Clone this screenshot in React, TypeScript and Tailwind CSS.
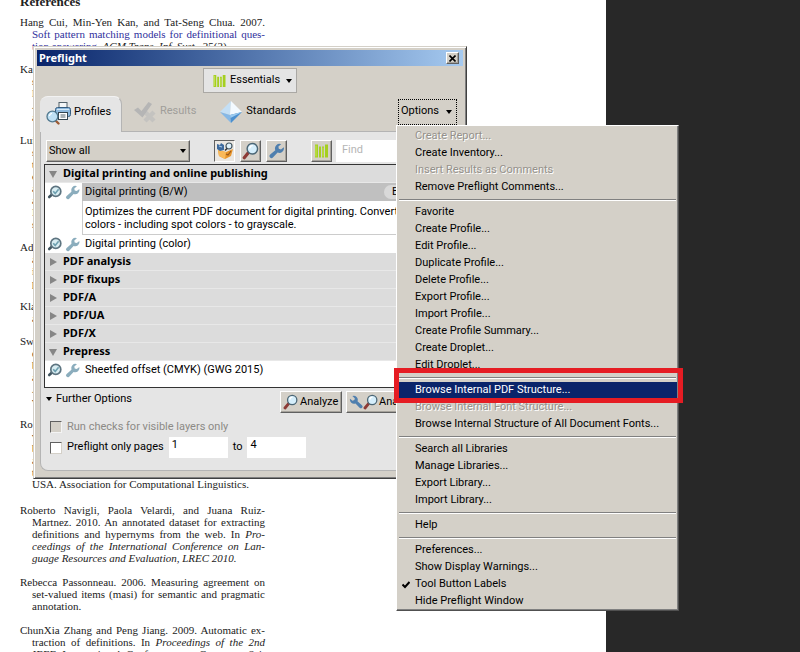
import React from "react";

const raised =
  "border border-t-white border-l-white border-r-[#606060] border-b-[#606060] bg-[#d4d0c8] shadow-[inset_-1px_-1px_0_#a5a29b]";

const Magnifier = ({ className = "" }: { className?: string }) => (
  <svg viewBox="0 0 20 20" className={className} aria-hidden="true">
    <path d="M7 12 L2.5 17.5" stroke="#8d3b36" strokeWidth="3.6" strokeLinecap="round" />
    <circle cx="11.5" cy="7.5" r="5.8" fill="#d5eefb" stroke="#4b6675" strokeWidth="1.6" />
    <path d="M8.5 7 a3.4 3.4 0 0 1 3.4 -3" fill="none" stroke="#fff" strokeWidth="1.6" />
  </svg>
);

const CheckMagnifier = () => (
  <svg viewBox="0 0 16 16" className="h-4 w-4" aria-hidden="true">
    <path d="M5 10.5 L2.2 13" stroke="#40545f" strokeWidth="2.6" strokeLinecap="round" />
    <circle cx="8.8" cy="7.4" r="5" fill="#d9edf2" stroke="#5d7480" strokeWidth="1.7" />
    <path d="M6.2 7.2 l2 2.2 l3.4 -4.2" fill="none" stroke="#6ea0b0" strokeWidth="1.6" />
  </svg>
);

const Wrench = ({ className = "", color = "#4f7fae" }: { className?: string; color?: string }) => (
  <svg viewBox="0 0 16 16" className={className} aria-hidden="true">
    <path
      d="M12.2 1.2 A4.6 4.6 0 0 0 6.3 7.2 L1.2 11.6 A1.9 1.9 0 0 0 3.9 14.6 L8.6 9.6 A4.6 4.6 0 0 0 14.8 4.2 L12 6.5 L9.8 5.8 L9.4 3.6 Z"
      fill={color}
    />
  </svg>
);

const Bars = ({ className = "" }: { className?: string }) => (
  <svg viewBox="0 0 13 13" className={className} aria-hidden="true">
    <path d="M0 0h3v13H0zM4 2h2v11H4zM7 2h2v11H7zM10 0h3v13h-3z" fill="#a5cf20" />
    <path d="M1 1v11M8 3v9" stroke="#c3e35a" />
  </svg>
);

const ProfilesIcon = () => (
  <svg viewBox="0 0 26 24" className="h-6 w-[26px]" aria-hidden="true">
    <rect x="13" y="1.5" width="8" height="7" fill="#f4f6f7" stroke="#53626b" />
    <rect x="9.5" y="6.5" width="15" height="9" rx="2" fill="#8db8dc" stroke="#345c80" />
    <path d="M11 8.5h12" stroke="#d3e8f7" />
    <rect x="12.5" y="11.5" width="9" height="7" fill="#fff" stroke="#33444f" />
    <path d="M14.5 14h5M14.5 16h5" stroke="#53626b" />
    <path d="M9.5 19.5 L12.5 22.5" stroke="#9c5b35" strokeWidth="2.4" strokeLinecap="round" />
    <circle cx="6.4" cy="15.5" r="5.4" fill="#bfe0f4" stroke="#52798f" strokeWidth="1.3" />
    <path d="M3.4 15 a3 3 0 0 1 2.6 -2.6" fill="none" stroke="#fff" strokeWidth="1.3" />
  </svg>
);

const ResultsIcon = () => (
  <svg viewBox="0 0 26 24" className="h-6 w-[26px]" aria-hidden="true">
    <path d="M12 12 L21 21 M21 12 L12 21" stroke="#c4c3c0" strokeWidth="4.4" />
    <path d="M1 10 L5 7.5 L8.5 11 L15.5 2 L19 4 L9.5 17.5 Z" fill="#b5b5b5" />
  </svg>
);

const StandardsIcon = () => (
  <svg viewBox="0 0 22 24" className="h-6 w-[22px]" aria-hidden="true">
    <path d="M11 1 L0 12 L10 15 Z" fill="#c4dff5" />
    <path d="M11 1 L22 12 L10 15 Z" fill="#f3faff" />
    <path d="M0 12 L10 15 L11 23 Z" fill="#86b8e6" />
    <path d="M22 12 L10 15 L11 23 Z" fill="#4c90cf" />
    <path d="M22 12 L10 15 L10.5 18 Z" fill="#9ccbf0" />
  </svg>
);

const ToolboxIcon = () => (
  <svg viewBox="0 0 18 18" className="h-[18px] w-[18px]" aria-hidden="true">
    <path d="M2 8 L10 10 L17 7 L15 14 L9 17 L3 14 Z" fill="#e8952c" />
    <path d="M2 8 L10 10 L9 17 L3 14 Z" fill="#f9b95a" />
    <path d="M10 12 L12 13 L15 9" fill="none" stroke="#9a5a1c" strokeWidth="1.2" />
    <path d="M1 2 l3 1 l1 -2 l3 2 l0 5 l-4 1 l-3 -2 z" fill="#3d6a9d" />
    <path d="M3 4 l3 1" stroke="#a8c8e6" strokeWidth="1.2" />
    <circle cx="13" cy="4" r="3" fill="#dff1fb" stroke="#42545f" strokeWidth="1.2" />
    <path d="M11 6.5 L9 8.5" stroke="#333" strokeWidth="1.6" />
  </svg>
);

const Triangle = ({ open }: { open?: boolean }) => (
  <svg viewBox="0 0 8 8" className="h-2 w-2" aria-hidden="true">
    <path d={open ? "M0 1h8L4 8z" : "M1 0v8L8 4z"} fill="#868686" />
  </svg>
);

const Caret = ({ className = "" }: { className?: string }) => (
  <svg viewBox="0 0 6 4" className={`h-1 w-1.5 ${className}`} aria-hidden="true">
    <path d="M0 0h6L3 4z" fill="#000" />
  </svg>
);

interface Line {
  text: React.ReactNode;
  end?: boolean;
}

const Reference = ({ lines }: { lines: Line[] }) => (
  <div>
    {lines.map((line, i) => (
      <p
        key={i}
        className={`h-3 whitespace-nowrap ${i > 0 ? "pl-3" : ""} ${line.end ? "" : "[text-align-last:justify]"}`}
      >
        {line.text}
      </p>
    ))}
  </div>
);

// entries mostly covered by the Preflight window
const covered = [
  ["Ka", "s", "l", "A", "a"],
  ["Lui", "s", "t", "c", "a", "a", "I", "s"],
  ["Ad", "a", "i", "p"],
  ["Kla", "a"],
  ["Sw", "e", "b", "a", "A", "v"],
];

const References = () => (
  <section className="w-[245px] font-['Liberation_Serif',serif] text-[11px] leading-3 text-[#222]">
    <h2 className="-mt-1 h-5 text-[13px] leading-3 font-bold">References</h2>
    <div className="flex flex-col gap-[11px]">
      <Reference
        lines={[
          { text: "Hang Cui, Min-Yen Kan, and Tat-Seng Chua. 2007." },
          { text: <span className="text-[#30309c]">Soft pattern matching models for definitional ques-</span> },
          {
            text: (
              <>
                <span className="text-[#30309c]">tion answering.</span> <i>ACM Trans. Inf. Syst.</i>, 25(2).
              </>
            ),
            end: true,
          },
        ]}
      />
      {covered.map((entry) => (
        <Reference key={entry[0]} lines={entry.map((text) => ({ text, end: true }))} />
      ))}
      <Reference
        lines={[
          { text: "Ro", end: true },
          { text: "v", end: true },
          { text: "b", end: true },
          { text: "a", end: true },
          { text: "ti", end: true },
          { text: "USA. Association for Computational Linguistics.", end: true },
        ]}
      />
    </div>
    <div className="mt-3.5 flex flex-col gap-3">
      <Reference
        lines={[
          { text: "Roberto Navigli, Paola Velardi, and Juana Ruiz-" },
          { text: "Martnez. 2010. An annotated dataset for extracting" },
          {
            text: (
              <>
                definitions and hypernyms from the web. In <i>Pro-</i>
              </>
            ),
          },
          { text: <i>ceedings of the International Conference on Lan-</i> },
          { text: <i>guage Resources and Evaluation, LREC 2010.</i>, end: true },
        ]}
      />
      <Reference
        lines={[
          { text: "Rebecca Passonneau. 2006. Measuring agreement on" },
          { text: "set-valued items (masi) for semantic and pragmatic" },
          { text: "annotation.", end: true },
        ]}
      />
      <Reference
        lines={[
          { text: "ChunXia Zhang and Peng Jiang. 2009. Automatic ex-" },
          {
            text: (
              <>
                traction of definitions. In <i>Proceedings of the 2nd</i>
              </>
            ),
          },
          { text: <i>IEEE International Conference on Computer Sci-</i> },
        ]}
      />
    </div>
  </section>
);

const GroupRow = ({ label, open }: { label: string; open?: boolean }) => (
  <button
    type="button"
    className="flex h-[18px] w-full items-center gap-1.5 border-b border-[#e8e8e8] bg-[#dcdcdc] px-1 text-left font-['Noto_Sans',sans-serif] font-bold"
  >
    <Triangle open={open} />
    {label}
  </button>
);

const ProfileRow = ({ label, selected }: { label: string; selected?: boolean }) => (
  <div className="flex h-[18px] items-center">
    <div className="flex w-[37px] shrink-0 items-center gap-0.5 pl-0.5">
      <CheckMagnifier />
      <Wrench className="h-[15px] w-4" color="#8badbd" />
    </div>
    <div className={`flex h-full flex-1 items-center pl-[3px] ${selected ? "bg-[#c0c0c0]" : ""}`}>
      {label}
      {selected && (
        <button type="button" className="mr-2 ml-auto w-16 rounded-full bg-[#d9d9d9] pl-2 text-left leading-[14px]">
          Edit...
        </button>
      )}
    </div>
  </div>
);

const Preflight = () => (
  <div
    role="dialog"
    aria-label="Preflight"
    className="absolute top-[46px] left-[33px] w-[434px] border border-t-[#d4d0c8] border-r-[#404040] border-b-[#404040] border-l-[#d4d0c8] bg-[#d4d0c8] p-[3px] shadow-[inset_1px_1px_0_#fff,inset_-1px_-1px_0_#808080]"
  >
    <header className="flex h-4 items-center justify-between bg-linear-to-r from-[#0a246a] to-[#a6caf0] pr-1 pl-0.5 font-['Noto_Sans',sans-serif] font-bold text-white">
      Preflight
      <button
        type="button"
        aria-label="Close"
        className={`flex h-3 w-[13px] items-center justify-center ${raised}`}
      >
        <svg viewBox="0 0 7 7" className="h-[7px] w-[7px]" aria-hidden="true">
          <path d="M0.5 0.5 L6.5 6.5 M6.5 0.5 L0.5 6.5" stroke="#000" strokeWidth="1.6" />
        </svg>
      </button>
    </header>

    <div className="mt-0.5 flex justify-center">
      <button
        type="button"
        className="flex h-[25px] w-[94px] items-center gap-1 border border-[#aaa8a4] bg-[#e4e4e4] pl-[9px]"
      >
        <Bars className="h-3 w-[13px]" />
        Essentials
        <Caret className="ml-0.5" />
      </button>
    </div>

    <div className="mt-[3px] flex h-9 items-stretch pl-[3px]">
      <button
        type="button"
        className="flex w-[82px] items-center gap-0.5 rounded-t-lg border-t border-r border-t-[#f2f2f2] border-r-[#b4b4b4] bg-[#e5e5e5] pb-1 pl-1.5"
      >
        <ProfilesIcon />
        Profiles
      </button>
      <div className="flex flex-1 items-center border-b border-[#b4b4b4] pb-1 pl-[11px]">
        <button type="button" disabled className="flex items-center gap-px text-[#a09e9a]">
          <ResultsIcon />
          Results
        </button>
        <button type="button" className="ml-6 flex items-center gap-1">
          <StandardsIcon />
          Standards
        </button>
        <button
          type="button"
          className="mr-1.5 ml-auto flex h-[26px] w-[59px] items-center justify-between border border-dotted border-black pr-1 pl-0.5"
        >
          Options
          <Caret />
        </button>
      </div>
    </div>

    <div className="mx-[3px] mb-1 rounded-b-lg border-b border-l border-[#b4b4b4] bg-[#e5e5e5] px-[3px] pt-2 pb-3">
      <div className="flex h-[22px] pl-0.5">
        <div className="relative w-36">
          <select
            aria-label="Show profiles"
            className={`h-full w-full appearance-none pl-0.5 ${raised}`}
          >
            <option>Show all</option>
          </select>
          <Caret className="pointer-events-none absolute top-[9px] right-1" />
        </div>
        <div className="ml-6 flex gap-[5px]">
          <button
            type="button"
            aria-label="Show profiles"
            className="flex w-[21px] items-center justify-center border border-t-[#606060] border-r-white border-b-white border-l-[#606060] bg-[#eae7e2]"
          >
            <ToolboxIcon />
          </button>
          <button type="button" aria-label="Select single checks" className={`flex w-[21px] items-center justify-center ${raised}`}>
            <Magnifier className="h-[18px] w-[18px]" />
          </button>
          <button type="button" aria-label="Select single fixups" className={`flex w-[21px] items-center justify-center ${raised}`}>
            <Wrench className="h-4 w-4" />
          </button>
        </div>
        <button type="button" aria-label="Library" className={`ml-6 flex w-[21px] items-center justify-center ${raised}`}>
          <Bars className="h-3.5 w-[13px]" />
        </button>
        <input
          aria-label="Find"
          placeholder="Find"
          className="ml-1 w-24 bg-white pb-0.5 pl-1.5 placeholder:text-[#b5b5b5] focus:outline-none"
        />
      </div>

      <div className="mt-0.5 border border-[#333] bg-white pb-2">
        <GroupRow label="Digital printing and online publishing" open />
        <ProfileRow label="Digital printing (B/W)" selected />
        <p className="ml-[37px] h-[34px] border-b border-l border-[#ccc] pt-1 pl-0.5 leading-[13px]">
          Optimizes the current PDF document for digital printing. Converts
          <br />
          colors - including spot colors - to grayscale.
        </p>
        <ProfileRow label="Digital printing (color)" />
        <GroupRow label="PDF analysis" />
        <GroupRow label="PDF fixups" />
        <GroupRow label="PDF/A" />
        <GroupRow label="PDF/UA" />
        <GroupRow label="PDF/X" />
        <GroupRow label="Prepress" open />
        <ProfileRow label="Sheetfed offset (CMYK) (GWG 2015)" />
      </div>

      <div className="mt-[3px] flex h-[22px] items-start">
        <button type="button" className="flex items-center gap-1 pl-0.5 leading-4">
          <Caret />
          Further Options
        </button>
        <div className="ml-auto flex h-full gap-1 pr-px">
          <button type="button" className={`flex w-[62px] items-center pl-0.5 ${raised}`}>
            <Magnifier className="h-4 w-4" />
            <span className="ml-px">Analyze</span>
          </button>
          <button type="button" className={`flex w-[110px] items-center pl-0.5 ${raised}`}>
            <Wrench className="h-3.5 w-3.5 -scale-x-100" />
            <Magnifier className="h-4 w-4" />
            Analyze and fix
          </button>
        </div>
      </div>

      <div className="mt-1 flex h-5 items-center gap-[5px] pl-1.5 text-[#8c8a86]">
        <input
          id="layers"
          type="checkbox"
          disabled
          className="h-3 w-3 appearance-none border border-t-[#606060] border-r-[#f4f4f4] border-b-[#f4f4f4] border-l-[#606060] bg-[#d4d0c8]"
        />
        <label htmlFor="layers">Run checks for visible layers only</label>
      </div>
      <div className="flex h-[21px] items-center gap-[5px] pl-1.5">
        <input
          id="pages"
          type="checkbox"
          className="h-3 w-3 appearance-none border border-t-[#606060] border-r-[#d4d0c8] border-b-[#d4d0c8] border-l-[#606060] bg-white"
        />
        <label htmlFor="pages">Preflight only pages</label>
        <input aria-label="First page" defaultValue="1" className="h-full w-[59px] bg-white pb-1.5 pl-[3px]" />
        <span>to</span>
        <input aria-label="Last page" defaultValue="4" className="h-full w-[59px] bg-white pb-1.5 pl-[3px]" />
      </div>
    </div>
  </div>
);

interface MenuItem {
  label: string;
  disabled?: boolean;
  active?: boolean;
  checked?: boolean;
}

const menu: MenuItem[][] = [
  [
    { label: "Create Report...", disabled: true },
    { label: "Create Inventory..." },
    { label: "Insert Results as Comments", disabled: true },
    { label: "Remove Preflight Comments..." },
  ],
  [
    { label: "Favorite" },
    { label: "Create Profile..." },
    { label: "Edit Profile..." },
    { label: "Duplicate Profile..." },
    { label: "Delete Profile..." },
    { label: "Export Profile..." },
    { label: "Import Profile..." },
    { label: "Create Profile Summary..." },
    { label: "Create Droplet..." },
    { label: "Edit Droplet..." },
  ],
  [
    { label: "Browse Internal PDF Structure...", active: true },
    { label: "Browse Internal Font Structure...", disabled: true },
    { label: "Browse Internal Structure of All Document Fonts..." },
  ],
  [
    { label: "Search all Libraries" },
    { label: "Manage Libraries..." },
    { label: "Export Library..." },
    { label: "Import Library..." },
  ],
  [{ label: "Help" }],
  [
    { label: "Preferences..." },
    { label: "Show Display Warnings..." },
    { label: "Tool Button Labels", checked: true },
    { label: "Hide Preflight Window" },
  ],
];

const OptionsMenu = () => (
  <div
    role="menu"
    className="absolute top-[125px] left-[396px] w-[283px] border border-t-white border-r-[#505050] border-b-[#505050] border-l-white bg-[#d4d0c8] px-px pt-0.5 shadow-[inset_-1px_-1px_0_#808080]"
  >
    {menu.map((group, g) => (
      <React.Fragment key={g}>
        {g > 0 && <div className="mx-px my-[3px] h-0.5 border-t border-b border-t-[#808080] border-b-white" />}
        {group.map((item) => (
          <button
            key={item.label}
            type="button"
            role="menuitem"
            disabled={item.disabled}
            className={`relative flex h-[17px] w-full items-center pl-[17px] ${
              item.active ? "bg-[#0a246a] text-white" : ""
            } ${item.disabled ? "text-[#94918b] [text-shadow:1px_1px_0_#fff]" : ""}`}
          >
            {item.checked && (
              <svg viewBox="0 0 8 8" className="absolute left-1 h-2 w-2" aria-hidden="true">
                <path d="M0.5 3.5 L3 6 L7.5 1" fill="none" stroke="#000" strokeWidth="2" />
              </svg>
            )}
            {item.label}
            {item.active && (
              <span className="absolute -top-3.5 -right-1.5 -bottom-1 -left-1 z-10 border-5 border-[#e51c23]" />
            )}
          </button>
        ))}
      </React.Fragment>
    ))}
  </div>
);

export default function App() {
  return (
    <div className="relative h-screen overflow-hidden bg-[#282828] font-[Roboto,sans-serif] text-[11px] whitespace-nowrap text-black">
      <main className="h-full w-[606px] overflow-hidden bg-white pl-5">
        <References />
      </main>
      <Preflight />
      <OptionsMenu />
    </div>
  );
}
